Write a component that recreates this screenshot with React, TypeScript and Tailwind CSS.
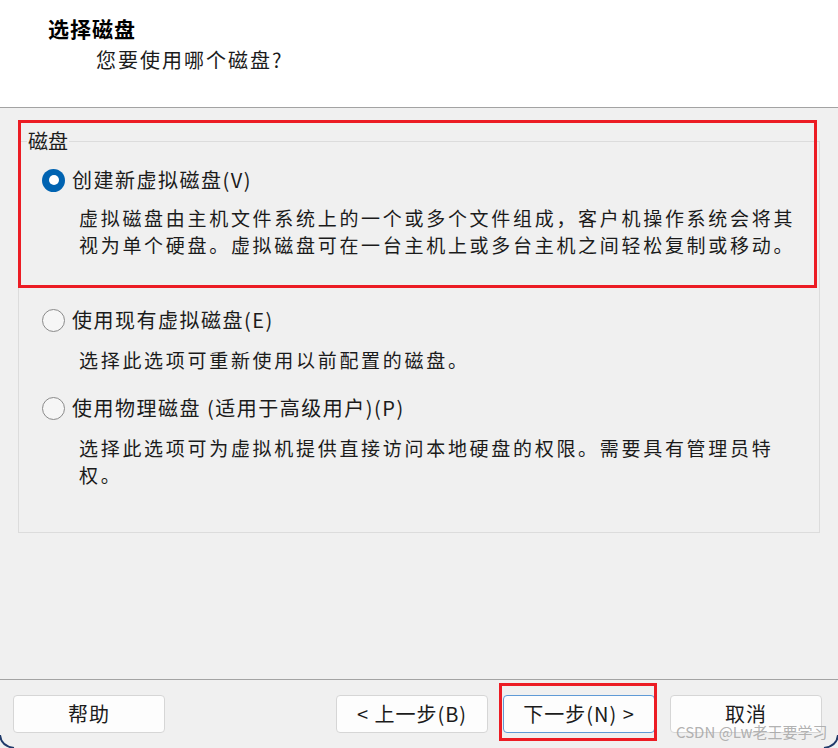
const font = "font-['Noto_Sans_CJK_SC','Noto_Sans',sans-serif]";

function Radio({ checked }: { checked?: boolean }) {
  if (checked) {
    return (
      <span className="flex h-[23px] w-[23px] flex-none items-center justify-center rounded-full bg-[#0063b1]">
        <span className="h-[10px] w-[10px] rounded-full bg-white" />
      </span>
    );
  }
  return <span className="h-[23px] w-[23px] flex-none rounded-full border-[1.5px] border-[#8a8a8a] bg-[#f6f6f6]" />;
}

function Option({ label, checked }: { label: string; checked?: boolean }) {
  return (
    <div className="flex h-[28px] items-center gap-[7px] pl-[23px]">
      <Radio checked={checked} />
      <span className="whitespace-nowrap text-[20px] leading-[28px] tracking-[1.5px] text-[#1b1b1b]">{label}</span>
    </div>
  );
}

function Desc({ lines, className }: { lines: string[]; className?: string }) {
  return (
    <div className={"pl-[60px] text-[19px] leading-[27px] tracking-[2.7px] text-[#1b1b1b] " + (className ?? "")}>
      {lines.map((line) => (
        <div key={line} className="whitespace-nowrap">
          {line}
        </div>
      ))}
    </div>
  );
}

function Button({ children, primary }: { children: React.ReactNode; primary?: boolean }) {
  return (
    <button
      className={
        "flex h-[38px] w-[152px] items-center justify-center rounded-[4px] border bg-[#fdfdfd] text-[20px] tracking-[1px] text-[#1b1b1b] " +
        (primary ? "border-[#5f9ad6]" : "border-[#d6d6d6]")
      }
    >
      {children}
    </button>
  );
}

export default function App() {
  return (
    <div className={"relative flex h-[748px] w-[838px] flex-col overflow-hidden bg-[#f0f0f0] " + font}>
      <header className="h-[108px] flex-none border-b border-[#a3a3a3] bg-white">
        <h1 className="pl-[48px] pt-[14px] text-[21px] font-bold leading-[28px] tracking-[1px] text-black">选择磁盘</h1>
        <p className="mt-[4px] pl-[96px] text-[20px] leading-[28px] tracking-[2px] text-[#1b1b1b]">您要使用哪个磁盘?</p>
      </header>

      <main className="flex-1 pt-[22px]">
        <fieldset className="ml-[18px] h-[403px] w-[802px] border border-[#dcdcdc]">
          <legend className="ml-[8px] px-[1px] text-[20px] leading-[22px] text-[#1b1b1b]">磁盘</legend>
          <div className="mt-[14px]">
            <Option label="创建新虚拟磁盘(V)" checked />
            <Desc
              className="mt-[10px]"
              lines={[
                "虚拟磁盘由主机文件系统上的一个或多个文件组成，客户机操作系统会将其",
                "视为单个硬盘。虚拟磁盘可在一台主机上或多台主机之间轻松复制或移动。",
              ]}
            />
          </div>
          <div className="mt-[48px]">
            <Option label="使用现有虚拟磁盘(E)" />
            <Desc className="mt-[12px]" lines={["选择此选项可重新使用以前配置的磁盘。"]} />
          </div>
          <div className="mt-[21px]">
            <Option label="使用物理磁盘 (适用于高级用户)(P)" />
            <Desc
              className="mt-[12px]"
              lines={["选择此选项可为虚拟机提供直接访问本地硬盘的权限。需要具有管理员特", "权。"]}
            />
          </div>
        </fieldset>
      </main>

      <footer className="flex h-[69px] flex-none items-start border-t border-[#a3a3a3] pl-[13px] pr-[16px] pt-[15px]">
        <Button>帮助</Button>
        <div className="ml-auto flex gap-[15px]">
          <Button>&lt; 上一步(B)</Button>
          <Button primary>下一步(N) &gt;</Button>
          <Button>取消</Button>
        </div>
      </footer>

      {/* red annotation boxes */}
      <div className="pointer-events-none absolute left-[18px] top-[120px] h-[168px] w-[799px] border-[3px] border-[#ec1c24]" />
      <div className="pointer-events-none absolute left-[499px] top-[683px] h-[58px] w-[158px] border-[3px] border-[#ec1c24]" />

      {/* watermark */}
      <div className="pointer-events-none absolute left-[676px] top-[722px] whitespace-nowrap text-[15px] leading-[20px] text-[#a8a8a8]/90">
        CSDN @Lw老王要学习
      </div>

      {/* window frame corners */}
      <svg className="pointer-events-none absolute bottom-0 left-0" width="16" height="14" viewBox="0 0 16 14">
        <path d="M0 1 Q1 12 14 14" fill="none" stroke="#1f3a6a" strokeWidth="2" />
      </svg>
      <svg className="pointer-events-none absolute bottom-0 right-0" width="16" height="14" viewBox="0 0 16 14">
        <path d="M16 1 Q15 12 2 14" fill="none" stroke="#1f3a6a" strokeWidth="2" />
      </svg>
    </div>
  );
}
